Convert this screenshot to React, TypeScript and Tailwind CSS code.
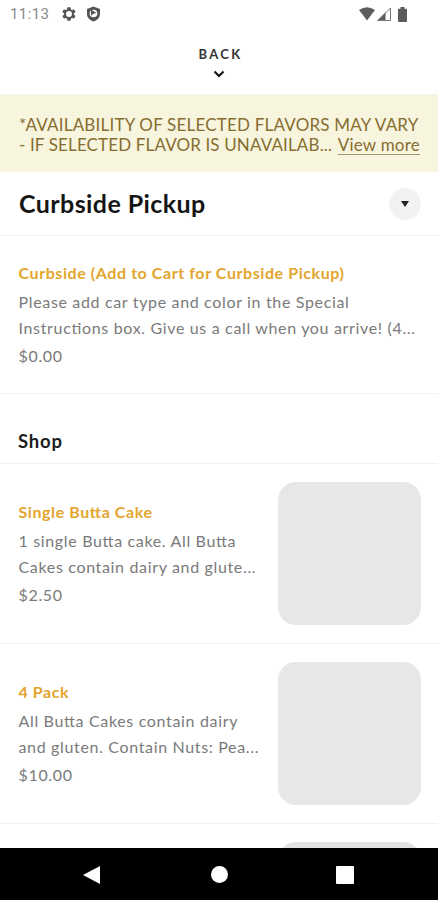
import React from "react";

const liga = "[font-feature-settings:'liga'_1]";

type ItemProps = {
  title: string;
  lines: string[];
  price: string;
  image?: boolean;
  className: string;
};

function MenuItem({ title, lines, price, image, className }: ItemProps) {
  return (
    <article className={`flex shrink-0 justify-between border-b border-[#f1f1f1] pr-[17px] pl-[18.5px] ${className}`}>
      <div className={`pt-[18px] text-[16px] tracking-[0.66px] whitespace-nowrap text-[#7a7a7a] ${liga}`}>
        <h3 className="h-[28px] leading-[24px] font-bold tracking-[0.58px] text-[#e3a52c]">{title}</h3>
        {lines.map((line) => (
          <p key={line} className="leading-[26px]">{line}</p>
        ))}
        <p className="mt-[2px] leading-[26px]">{price}</p>
      </div>
      {image && <div className="size-[143px] shrink-0 rounded-[18px] bg-[#e7e7e7]" />}
    </article>
  );
}

function StatusBar() {
  return (
    <div className="flex h-[28px] shrink-0 items-center pl-[10px]">
      <span className="w-[51px] font-[Roboto,sans-serif] text-[15px] tracking-[0.4px] text-[#8a8a8a]">11:13</span>
      <svg className="size-[16px] shrink-0" viewBox="0 0 24 24" fill="#555">
        <path fillRule="evenodd" d="M19.4 13a7.8 7.8 0 0 0 0-2l2.1-1.6c.2-.2.3-.4.1-.7l-2-3.4c-.1-.2-.4-.3-.6-.2l-2.5 1a7.3 7.3 0 0 0-1.7-1l-.4-2.6a.5.5 0 0 0-.5-.5h-4a.5.5 0 0 0-.5.5L9 5.1c-.6.2-1.2.6-1.7 1l-2.5-1c-.2-.1-.5 0-.6.2l-2 3.4c-.2.3-.1.5.1.7L4.500 11a7.800 7.800 0 0 0 0 2l-2.200 1.600c-.2.2-.3.4-.1.7l2 3.400c.1.2.4.3.6.2l2.500-1c.5.4 1.100.8 1.700 1l.4 2.600c0 .3.2.5.5.5h4c.3 0 .5-.2.5-.5l.4-2.600c.6-.2 1.200-.6 1.700-1l2.500 1c.2.1.5 0 .6-.2l2-3.400c.2-.3.1-.5-.1-.7zM12 16.500a4.500 4.500 0 1 1 0-9 4.500 4.500 0 0 1 0 9z" />
      </svg>
      <svg className="ml-[9px] h-[16px] w-[15px] shrink-0" viewBox="0 0 15 16">
        <path fill="#555" d="M7.500.5 14 3v5c0 3.500-2.500 6.200-6.500 7.500C3.500 14.200 1 11.500 1 8V3z" />
        <circle cx="7.500" cy="7.500" r="3.800" fill="#fff" />
        <path fill="#555" d="m5 3.500 5.500 3.500-3 .8-2.500 2z" />
      </svg>
      <div className="ml-auto flex items-center pr-[31px]">
        <svg className="h-[14px] w-[16px]" viewBox="0 0 16 14">
          <path fill="#5c5c5c" d="M0 3Q8-2.500 16 3L8 13.500z" />
        </svg>
        <svg className="ml-[2px] h-[14px] w-[14px]" viewBox="0 0 14 14">
          <path fill="#5c5c5c" d="M0 14 8.500 5.200V14z" />
          <path fill="none" stroke="#777" d="M1 13.500 13.500 1v12.500z" />
        </svg>
        <svg className="ml-[7px] h-[15px] w-[9px]" viewBox="0 0 9 15">
          <path fill="#5c5c5c" d="M2.500 0h4v1.800H8a1 1 0 0 1 1 1V14a1 1 0 0 1-1 1H1a1 1 0 0 1-1-1V2.800a1 1 0 0 1 1-1h1.500z" />
        </svg>
      </div>
    </div>
  );
}

export default function App() {
  return (
    <main className="flex h-[900px] w-[438px] flex-col overflow-hidden bg-white font-[Lato,sans-serif]">
      <StatusBar />
      <button className="flex h-[67px] shrink-0 flex-col items-center border-b border-[#f6f3f5] pt-[16.5px]">
        <span className="pl-[3px] text-[13px] leading-[18px] font-bold tracking-[2.3px] text-[#333]">BACK</span>
        <svg className="mt-[7px] h-[8px] w-[12px]" viewBox="0 0 12 8" fill="none" stroke="#111" strokeWidth="2">
          <path d="m1.500 1.500 4.500 4.500 4.500-4.500" />
        </svg>
      </button>

      <section className="h-[77px] shrink-0 bg-[#f8f5de] pt-[20px] pr-[18px] pl-[19px] text-[17px] leading-[20px] whitespace-nowrap text-[#866d30]">
        <p className="tracking-[0.2px]">*AVAILABILITY OF SELECTED FLAVORS MAY VARY</p>
        <div className="flex justify-between">
          <span className="tracking-[0.14px]">- IF SELECTED FLAVOR IS UNAVAILAB...</span>
          <a className="h-[20px] border-b border-[#a39469] tracking-[0.23px]">View more</a>
        </div>
      </section>

      <header className="flex h-[64px] shrink-0 items-center justify-between border-b border-[#f1f1f1] pr-[17px] pl-[19px]">
        <h1 className="text-[25px] font-bold tracking-[0.42px] text-[#151515]">Curbside Pickup</h1>
        <button className="flex size-[32px] items-center justify-center rounded-full bg-[#f2f2f2]">
          <svg className="h-[6px] w-[8px]" viewBox="0 0 8 6" fill="#222">
            <path d="M0 0h8L4 6z" />
          </svg>
        </button>
      </header>

      <MenuItem
        className="h-[158px] pt-[7px]"
        title="Curbside (Add to Cart for Curbside Pickup)"
        lines={["Please add car type and color in the Special", "Instructions box. Give us a call when you arrive! (4..."]}
        price="$0.00"
      />

      <h2 className="h-[70px] shrink-0 border-b border-[#f1f1f1] pt-[35px] pl-[18px] text-[18.5px] leading-[24px] font-bold tracking-[0.8px] text-[#1c1c1c]">Shop</h2>

      <MenuItem
        className="h-[180px] pt-[18px]"
        title="Single Butta Cake"
        lines={["1 single Butta cake. All Butta", "Cakes contain dairy and glute..."]}
        price="$2.50"
        image
      />
      <MenuItem
        className="h-[180px] pt-[18px]"
        title="4 Pack"
        lines={["All Butta Cakes contain dairy", "and gluten. Contain Nuts: Pea..."]}
        price="$10.00"
        image
      />
      <div className="flex h-[24px] shrink-0 justify-end overflow-hidden pt-[18px] pr-[17px]">
        <div className="h-[143px] w-[143px] rounded-[18px] bg-[#e2e2e2]" />
      </div>

      <nav className="flex h-[53px] shrink-0 items-center bg-black pl-[83px]">
        <svg className="h-[18px] w-[17px]" viewBox="0 0 17 18" fill="#fff">
          <path d="M17 0v18L0 9z" />
        </svg>
        <div className="ml-[111px] size-[17px] rounded-full bg-white" />
        <div className="ml-[108px] size-[18px] rounded-[1px] bg-white" />
      </nav>
    </main>
  );
}
